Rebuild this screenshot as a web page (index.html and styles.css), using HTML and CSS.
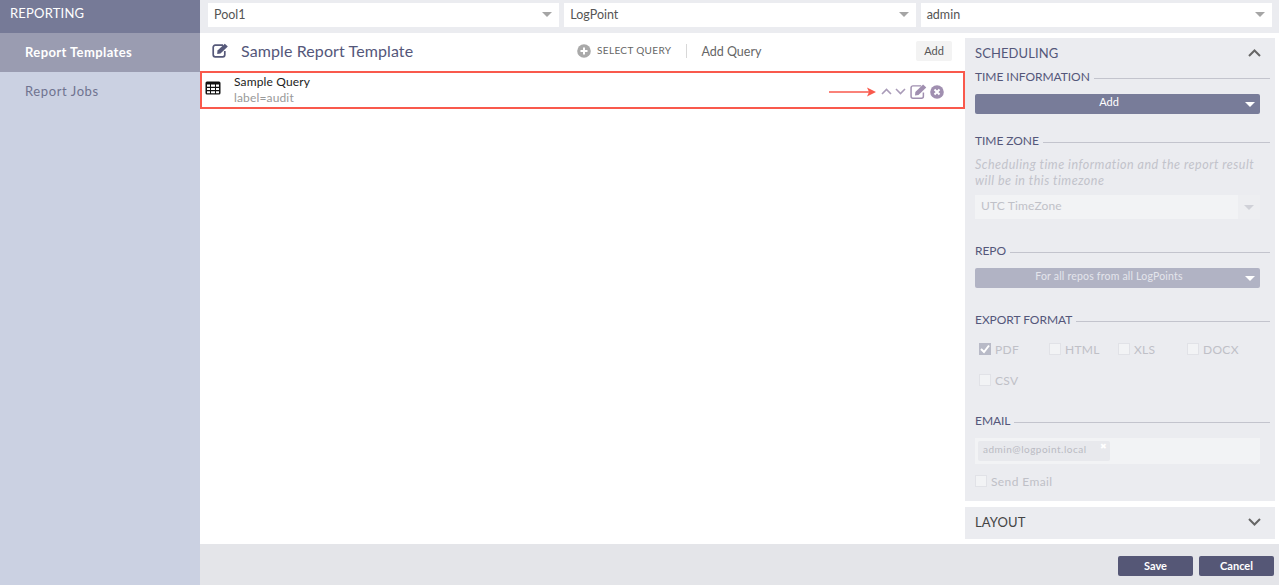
FILE: index.html
```html
<!DOCTYPE html>
<html lang="en">
<head>
<meta charset="utf-8">
<title>Reporting</title>
<link rel="stylesheet" href="styles.css">
</head>
<body>
<div class="app">
  <aside class="sidebar">
    <div class="side-head">REPORTING</div>
    <div class="side-item active">Report Templates</div>
    <div class="side-item">Report Jobs</div>
  </aside>
  <div class="content">
    <div class="topbar">
      <div class="select"><span>Pool1</span><i class="caret"></i></div>
      <div class="select"><span>LogPoint</span><i class="caret"></i></div>
      <div class="select"><span>admin</span><i class="caret"></i></div>
    </div>
    <div class="workspace">
      <main class="main">
        <div class="title-row">
          <svg class="title-icon" width="17" height="15" viewBox="0 0 17 15"><path d="M11 2.2H3.2A2 2 0 0 0 1.2 4.200V11.800A2 2 0 0 0 3.200 13.800H10.800A2 2 0 0 0 12.800 11.800V8" fill="none" stroke="#56597a" stroke-width="1.700"/><path d="M5.500 7.500L12.800 .7L15.800 3.500L8.500 10.500L5.200 11Z" fill="#56597a"/></svg>
          <h1 class="title">Sample Report Template</h1>
          <div class="query-tools">
            <svg class="plus-icon" width="14" height="14" viewBox="0 0 14 14"><circle cx="7" cy="7" r="6.800" fill="#a9a9a9"/><path d="M3.500 7H10.500M7 3.500V10.500" stroke="#fff" stroke-width="2"/></svg>
            <span class="select-query">SELECT QUERY</span>
            <span class="divider"></span>
            <span class="add-query">Add Query</span>
          </div>
          <button class="add-btn">Add</button>
        </div>
        <div class="query-row">
          <svg class="table-icon" width="16" height="14" viewBox="0 0 16 14"><rect x="0.500" y="0.500" width="15" height="13" rx="1.500" fill="#111"/><path d="M2 3.500H5V5.700H2ZM6 3.500H10V5.700H6ZM11 3.500H14V5.700H11ZM2 6.900H5V9H2ZM6 6.900H10V9H6ZM11 6.900H14V9H11ZM2 10.200H5V12.300H2ZM6 10.200H10V12.300H6ZM11 10.200H14V12.300H11Z" fill="#fff"/></svg>
          <div class="query-text">
            <div class="query-name">Sample Query</div>
            <div class="query-sub">label=audit</div>
          </div>
          <div class="row-actions">
            <svg class="arrow" width="47" height="10" viewBox="0 0 47 10"><path d="M0 5H42" stroke="#f9594c" stroke-width="1.500"/><path d="M38 .5L47 5L38 9.500L40 5Z" fill="#f9594c"/></svg>
            <svg class="chev" width="11" height="7" viewBox="0 0 11 7"><path d="M1 6L5.500 1.500L10 6" fill="none" stroke="#a99bb8" stroke-width="1.600"/></svg>
            <svg class="chev" width="11" height="7" viewBox="0 0 11 7"><path d="M1 1L5.500 5.500L10 1" fill="none" stroke="#a99bb8" stroke-width="1.600"/></svg>
            <svg class="edit" width="16" height="14" viewBox="0 0 16 14"><path d="M10.500 1.700H2.800A1.800 1.800 0 0 0 1 3.500V11.500A1.800 1.800 0 0 0 2.800 13.300H10.800A1.800 1.800 0 0 0 12.600 11.500V8" fill="none" stroke="#a08fb0" stroke-width="1.400"/><path d="M5 7.500L12.300 .4L15.300 3.200L8 10.200L4.700 10.700Z" fill="#a08fb0"/></svg>
            <svg class="close" width="14" height="14" viewBox="0 0 14 14"><circle cx="7" cy="7" r="6.800" fill="#a08fb0"/><path d="M4.500 4.500L9.500 9.500M9.500 4.500L4.500 9.500" stroke="#fff" stroke-width="2"/></svg>
          </div>
        </div>
      </main>
      <div class="panels">
        <section class="panel scheduling">
          <header class="panel-head">
            <span>SCHEDULING</span>
            <svg width="13" height="8" viewBox="0 0 13 8"><path d="M1 7L6.500 1.500L12 7" fill="none" stroke="#666" stroke-width="2"/></svg>
          </header>
          <div class="legend first">TIME INFORMATION</div>
          <div class="dd"><span>Add</span><i class="caret white"></i></div>
          <div class="legend zone">TIME ZONE</div>
          <p class="hint">Scheduling time information and the report result will be in this timezone</p>
          <div class="tz"><span class="tz-field">UTC TimeZone</span><span class="tz-arrow"><i class="caret pale"></i></span></div>
          <div class="legend repo">REPO</div>
          <div class="dd muted"><span>For all repos from all LogPoints</span><i class="caret white"></i></div>
          <div class="legend export">EXPORT FORMAT</div>
          <div class="checks">
            <label class="check w-pdf"><span class="box on"><svg width="12" height="12" viewBox="0 0 12 12"><path d="M2 6L5 9L10 2.500" fill="none" stroke="#fff" stroke-width="2"/></svg></span>PDF</label>
            <label class="check w-html"><span class="box"></span>HTML</label>
            <label class="check w-xls"><span class="box"></span>XLS</label>
            <label class="check w-docx"><span class="box"></span>DOCX</label>
            <label class="check w-csv"><span class="box"></span>CSV</label>
          </div>
          <div class="legend email">EMAIL</div>
          <div class="email-box"><span class="tag">admin@logpoint.local<b class="tag-x">✖</b></span></div>
          <label class="check send"><span class="box"></span>Send Email</label>
        </section>
        <section class="panel layout">
          <header class="panel-head">
            <span>LAYOUT</span>
            <svg width="13" height="8" viewBox="0 0 13 8"><path d="M1 1L6.500 6.500L12 1" fill="none" stroke="#666" stroke-width="2"/></svg>
          </header>
        </section>
      </div>
    </div>
    <footer class="footer">
      <button class="foot-btn">Save</button>
      <button class="foot-btn">Cancel</button>
    </footer>
  </div>
</div>
</body>
</html>
```

FILE: styles.css
```css
* { box-sizing: border-box; }
html, body { margin: 0; height: 100%; overflow: hidden; }
body { font-family: Lato, "Open Sans", sans-serif; color: #54577a; background: #fff; }
.app { display: flex; width: 1279px; height: 585px; }

.sidebar { width: 200px; flex: none; background: #cbd1e2; }
.side-head { height: 33px; background: #767a97; color: #fff; font-size: 13px; padding: 5px 0 0 10px; line-height: 16px; letter-spacing: .2px; }
.side-item { height: 39px; padding: 0 0 0 25px; line-height: 38px; font-size: 13px; color: #6f7390; letter-spacing: .6px; }
.side-item.active { background: #9a9cb1; color: #fff; font-weight: 700; letter-spacing: .4px; }

.content { flex: 1; display: flex; flex-direction: column; min-width: 0; }
.topbar { height: 33px; flex: none; background: #ebecf0; display: flex; gap: 5px; padding: 3px 7px 6px 8px; }
.select { flex: 1; background: #fff; display: flex; align-items: center; justify-content: space-between; padding: 0 7px 2px 6px; font-size: 12.500px; color: #555; }
.caret { display: block; width: 0; height: 0; border-left: 5px solid transparent; border-right: 5px solid transparent; border-top: 5px solid #a5a5a5; }
.caret.white { border-top-color: #fff; }
.caret.pale { border-top-color: #d0d1d8; }

.workspace { flex: 1; display: flex; min-height: 0; }
.main { width: 765px; flex: none; }
.title-row { height: 38px; display: flex; align-items: center; padding: 0 13px 3px 12px; }
.title-icon { flex: none; }
.title { margin: 0 0 0 12px; font-size: 16px; font-weight: 400; color: #54577a; letter-spacing: .1px; white-space: nowrap; width: 336px; }
.query-tools { display: flex; align-items: center; }
.select-query { font-size: 10px; color: #666; margin-left: 6px; padding-bottom: 1px; letter-spacing: .35px; }
.divider { width: 1px; height: 14px; background: #d8d8d8; margin: 0 14px 0 15px; }
.add-query { font-size: 12.500px; color: #666; padding-top: 2px; }
.add-btn { margin-left: auto; width: 36px; height: 20px; border: 0; padding: 0; border-radius: 2px; background: #f3f3f3; color: #555; font: 11px Lato, sans-serif; }

.query-row { height: 38px; border: 2px solid #f9594c; display: flex; align-items: center; padding: 0 0 4px 3px; }
.table-icon { flex: none; }
.query-text { margin-left: 13px; line-height: 16px; margin-top: 4px; }
.query-name { font-size: 12px; color: #222; letter-spacing: .15px; }
.query-sub { font-size: 12px; color: #999; letter-spacing: .15px; }
.row-actions { margin-left: auto; margin-right: 19px; display: flex; align-items: center; margin-top: 7px; }
.arrow { margin-right: 5px; }
.chev { margin-right: 3px; }
.edit { width: 17px; height: 15px; margin: 0 3px 0 1px; }

.panels { width: 310px; flex: none; padding-top: 5px; display: flex; flex-direction: column; gap: 6px; }
.panel { background: #ebecf0; padding: 0 5px 0 10px; }
.scheduling { height: 463px; }
.layout { height: 32px; }
.panel-head { display: flex; align-items: center; justify-content: space-between; font-size: 13px; color: #54577a; padding-right: 9px; height: 30px; letter-spacing: .1px; }
.layout .panel-head { color: #444; }
.legend { display: flex; align-items: center; gap: 4px; font-size: 12px; color: #54577a; line-height: 16px; white-space: nowrap; letter-spacing: -.05px; }
.legend::after { content: ""; flex: 1; height: 1px; background: #c3c4cd; margin-top: 2px; }
.legend.first { margin-top: 1px; }
.legend.zone { margin-top: 19px; }
.legend.repo { margin-top: 24px; }
.legend.export { margin-top: 24px; }
.legend.email { margin-top: 23px; }
.dd { width: 285px; height: 20px; margin-top: 9px; border-radius: 2px; background: #787c99; color: #fff; font-size: 11px; display: flex; align-items: center; justify-content: center; position: relative; padding: 0 17px 5px 0; }
.dd .caret { position: absolute; right: 5px; top: 8px; }
.dd.muted { background: #b1b3c4; color: #e4e5ec; font-size: 10.500px; letter-spacing: .2px; }
.hint { margin: 8px 0 0; font-size: 12.500px; line-height: 16px; font-style: italic; color: #c2c3cb; letter-spacing: .5px; width: 285px; }
.tz { display: flex; width: 285px; height: 24px; margin-top: 6px; }
.tz-field { flex: 1; padding-left: 6px; font-size: 12px; line-height: 22px; color: #c0c1c8; letter-spacing: .15px; background: #f2f3f5; }
.tz-arrow { width: 22px; display: flex; align-items: center; justify-content: center; background: #edeef1; }
.checks { display: flex; flex-wrap: wrap; margin: 11px 0 0 4px; row-gap: 11px; }
.check { display: flex; align-items: center; gap: 4px; font-size: 12px; color: #bfc0c7; height: 20px; letter-spacing: .3px; }
.box { width: 12px; height: 12px; display: block; background: #f2f3f5; border: 1px solid #e1e2e7; flex: none; }
.box.on { background: #b8bac7; border-color: #b8bac7; }
.box.on svg { display: block; margin: -1px; }
.w-pdf { width: 70px; }
.w-html { width: 69px; }
.w-xls { width: 69px; }
.w-docx { width: 70px; }
.w-csv { width: 70px; }
.email-box { width: 285px; height: 26px; margin-top: 9px; background: #f2f3f5; padding: 3px 3px 0; }
.tag { display: block; width: 132px; height: 20px; background: #e8e9ed; border-radius: 2px; font-size: 10px; line-height: 16px; color: #babbc3; padding-left: 5px; position: relative; letter-spacing: .5px; }
.tag-x { position: absolute; right: 3px; top: -3px; font-size: 8px; font-weight: 400; color: #fff; }
.send { margin-top: 7px; letter-spacing: .4px; }

.footer { height: 41px; flex: none; background: #e4e5e9; display: flex; justify-content: flex-end; gap: 6px; padding: 12px 5px 0 0; }
.foot-btn { width: 75px; height: 20px; border: 0; padding: 0 0 2px; border-radius: 2px; background: #555776; color: #fff; font: 700 11px Lato, sans-serif; }
```
